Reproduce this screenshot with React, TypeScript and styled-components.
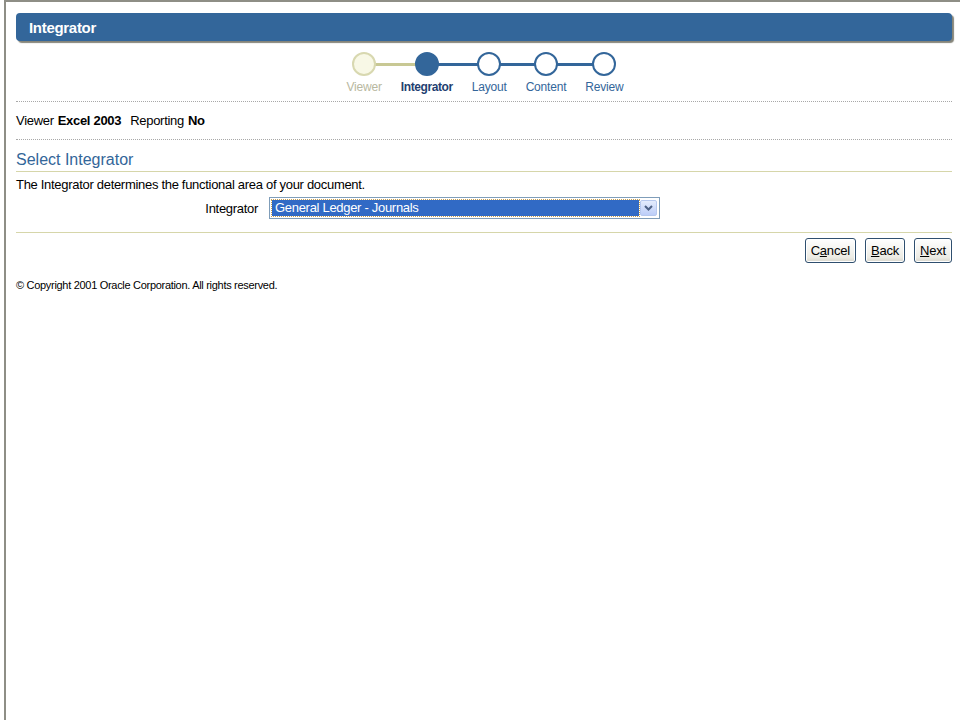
import styled, { createGlobalStyle } from "styled-components";

// ─── Global ───────────────────────────────────────────────────────────────────

const GlobalStyle = createGlobalStyle`
  html, body { margin: 0; padding: 0; background: #fff; }
  body { font-family: "Liberation Sans", Arial, sans-serif; color: #000; }
  * { box-sizing: border-box; }
`;

// ─── Data ─────────────────────────────────────────────────────────────────────

type StepState = "visited" | "current" | "next";
const STEPS: { label: string; state: StepState }[] = [
  { label: "Viewer",     state: "visited" },
  { label: "Integrator", state: "current" },
  { label: "Layout",     state: "next" },
  { label: "Content",    state: "next" },
  { label: "Review",     state: "next" },
];

const STEP_GAP = 19;

// ─── Styled ───────────────────────────────────────────────────────────────────

const Frame = styled.div`
  margin-left: 4px;
  min-height: 720px;
  border-left: 2px solid #8e8e86;
  border-top: 2px solid #8e8e86;
  padding: 11px 8px 0 10px;
`;

const HeaderBar = styled.div`
  height: 28px;
  background: #33669a;
  border-radius: 4px;
  box-shadow: 2px 2px 1px #85857a;
  display: flex;
  align-items: center;
  padding-left: 13px;
`;

const HeaderTitle = styled.h1`
  margin: 0;
  font-size: 15px;
  font-weight: 700;
  color: #fff;
  letter-spacing: -0.3px;
`;

const Train = styled.div`
  display: flex;
  justify-content: center;
  gap: ${STEP_GAP}px;
  padding-top: 11px;
  padding-left: 2px;
  height: 60px;
`;

const Step = styled.div`
  display: flex;
  flex-direction: column;
  align-items: center;
  position: relative;
`;

const HalfLine = styled.span<{ $side: "left" | "right"; $visited: boolean }>`
  position: absolute;
  top: 11px;
  height: 3px;
  background: ${({ $visited }) => ($visited ? "#c8c894" : "#33669a")};
  ${({ $side }) =>
    $side === "left"
      ? "left: 0; right: 50%;"
      : `left: 50%; right: -${STEP_GAP}px;`}
`;

const Dot = styled.span<{ $state: StepState }>`
  position: relative;
  z-index: 1;
  width: 24px;
  height: 24px;
  border-radius: 50%;
  border: 2px solid ${({ $state }) => ($state === "visited" ? "#d8d8b0" : "#33669a")};
  background: ${({ $state }) =>
    $state === "visited" ? "#f8f8e6" : $state === "current" ? "#33669a" : "#fff"};
`;

const StepLabel = styled.span<{ $state: StepState }>`
  margin-top: 4px;
  font-size: 12px;
  line-height: 14px;
  letter-spacing: ${({ $state }) => ($state === "current" ? "-0.4px" : "-0.2px")};
  font-weight: ${({ $state }) => ($state === "current" ? 700 : 400)};
  color: ${({ $state }) =>
    $state === "visited" ? "#b8b8a0" : $state === "current" ? "#1f3f70" : "#33669a"};
  white-space: nowrap;
`;

const Dotted = styled.div`
  border-top: 1px dotted #a8a8a8;
  height: 0;
`;

const InfoRow = styled.div`
  display: flex;
  gap: 4px;
  align-items: center;
  height: 37px;
  font-size: 13px;
  letter-spacing: -0.3px;
`;

const InfoValue = styled.b`
  margin-right: 5px;
`;

const SectionTitle = styled.h2`
  margin: 0;
  padding-top: 9px;
  font-size: 16px;
  font-weight: 400;
  color: #336699;
  line-height: 22px;
  border-bottom: 1px solid #d6d6aa;
`;

const Instruction = styled.p`
  margin: 0;
  padding-top: 5px;
  font-size: 13px;
  line-height: 16px;
  letter-spacing: -0.3px;
`;

const FieldRow = styled.div`
  display: flex;
  align-items: center;
  padding-top: 4px;
  padding-bottom: 13px;
  border-bottom: 1px solid #d6d6aa;
`;

const FieldLabel = styled.label`
  width: 253px;
  text-align: right;
  padding-right: 11px;
  font-size: 13px;
  letter-spacing: -0.3px;
`;

const SelectBox = styled.div`
  width: 391px;
  height: 22px;
  border: 1px solid #7f9db9;
  padding: 2px;
  display: flex;
  background: #fff;
`;

const SelectValue = styled.div`
  flex: 1;
  background: #316ac5;
  color: #fff;
  font-size: 13px;
  line-height: 16px;
  letter-spacing: -0.3px;
  padding-left: 3px;
  outline: 1px dotted #c8a050;
`;

const SelectArrow = styled.div`
  width: 17px;
  margin-left: 1px;
  border: 1px solid #b6c8ee;
  border-radius: 2px;
  background: linear-gradient(#e4ecfd, #bccdf8);
  display: flex;
  align-items: center;
  justify-content: center;
`;

const ButtonBar = styled.div`
  display: flex;
  justify-content: flex-end;
  gap: 9px;
  padding-top: 5px;
`;

const Button = styled.button`
  height: 25px;
  padding: 0 5px;
  font-family: "Liberation Sans", Arial, sans-serif;
  font-size: 13px;
  letter-spacing: -0.2px;
  color: #000;
  border: 1px solid #2f4f6f;
  border-radius: 3px;
  background: linear-gradient(#ffffff, #ecebe4 80%, #d8d6cc);
  box-shadow: inset 0 0 0 1px #fff;
  cursor: pointer;
  u { text-decoration: underline; }
`;

const Copyright = styled.p`
  margin: 0;
  padding-top: 16px;
  font-size: 11px;
  line-height: 13px;
  letter-spacing: -0.3px;
`;

// ─── Component ────────────────────────────────────────────────────────────────

export default function App() {
  return (
    <>
      <GlobalStyle />
      <Frame>
        <HeaderBar>
          <HeaderTitle>Integrator</HeaderTitle>
        </HeaderBar>

        <Train>
          {STEPS.map((s, i) => (
            <Step key={s.label}>
              {i > 0 && <HalfLine $side="left" $visited={STEPS[i - 1].state === "visited"} />}
              {i < STEPS.length - 1 && <HalfLine $side="right" $visited={s.state === "visited"} />}
              <Dot $state={s.state} />
              <StepLabel $state={s.state}>{s.label}</StepLabel>
            </Step>
          ))}
        </Train>

        <Dotted />
        <InfoRow>
          Viewer <InfoValue>Excel 2003</InfoValue> Reporting <InfoValue>No</InfoValue>
        </InfoRow>
        <Dotted />

        <SectionTitle>Select Integrator</SectionTitle>
        <Instruction>The Integrator determines the functional area of your document.</Instruction>

        <FieldRow>
          <FieldLabel>Integrator</FieldLabel>
          <SelectBox>
            <SelectValue>General Ledger - Journals</SelectValue>
            <SelectArrow>
              <svg width="9" height="6" viewBox="0 0 9 6">
                <path d="M1 1 L4.5 4.5 L8 1" fill="none" stroke="#4d6185" strokeWidth="2" />
              </svg>
            </SelectArrow>
          </SelectBox>
        </FieldRow>

        <ButtonBar>
          <Button>C<u>a</u>ncel</Button>
          <Button><u>B</u>ack</Button>
          <Button><u>N</u>ext</Button>
        </ButtonBar>

        <Copyright>© Copyright 2001 Oracle Corporation. All rights reserved.</Copyright>
      </Frame>
    </>
  );
}
